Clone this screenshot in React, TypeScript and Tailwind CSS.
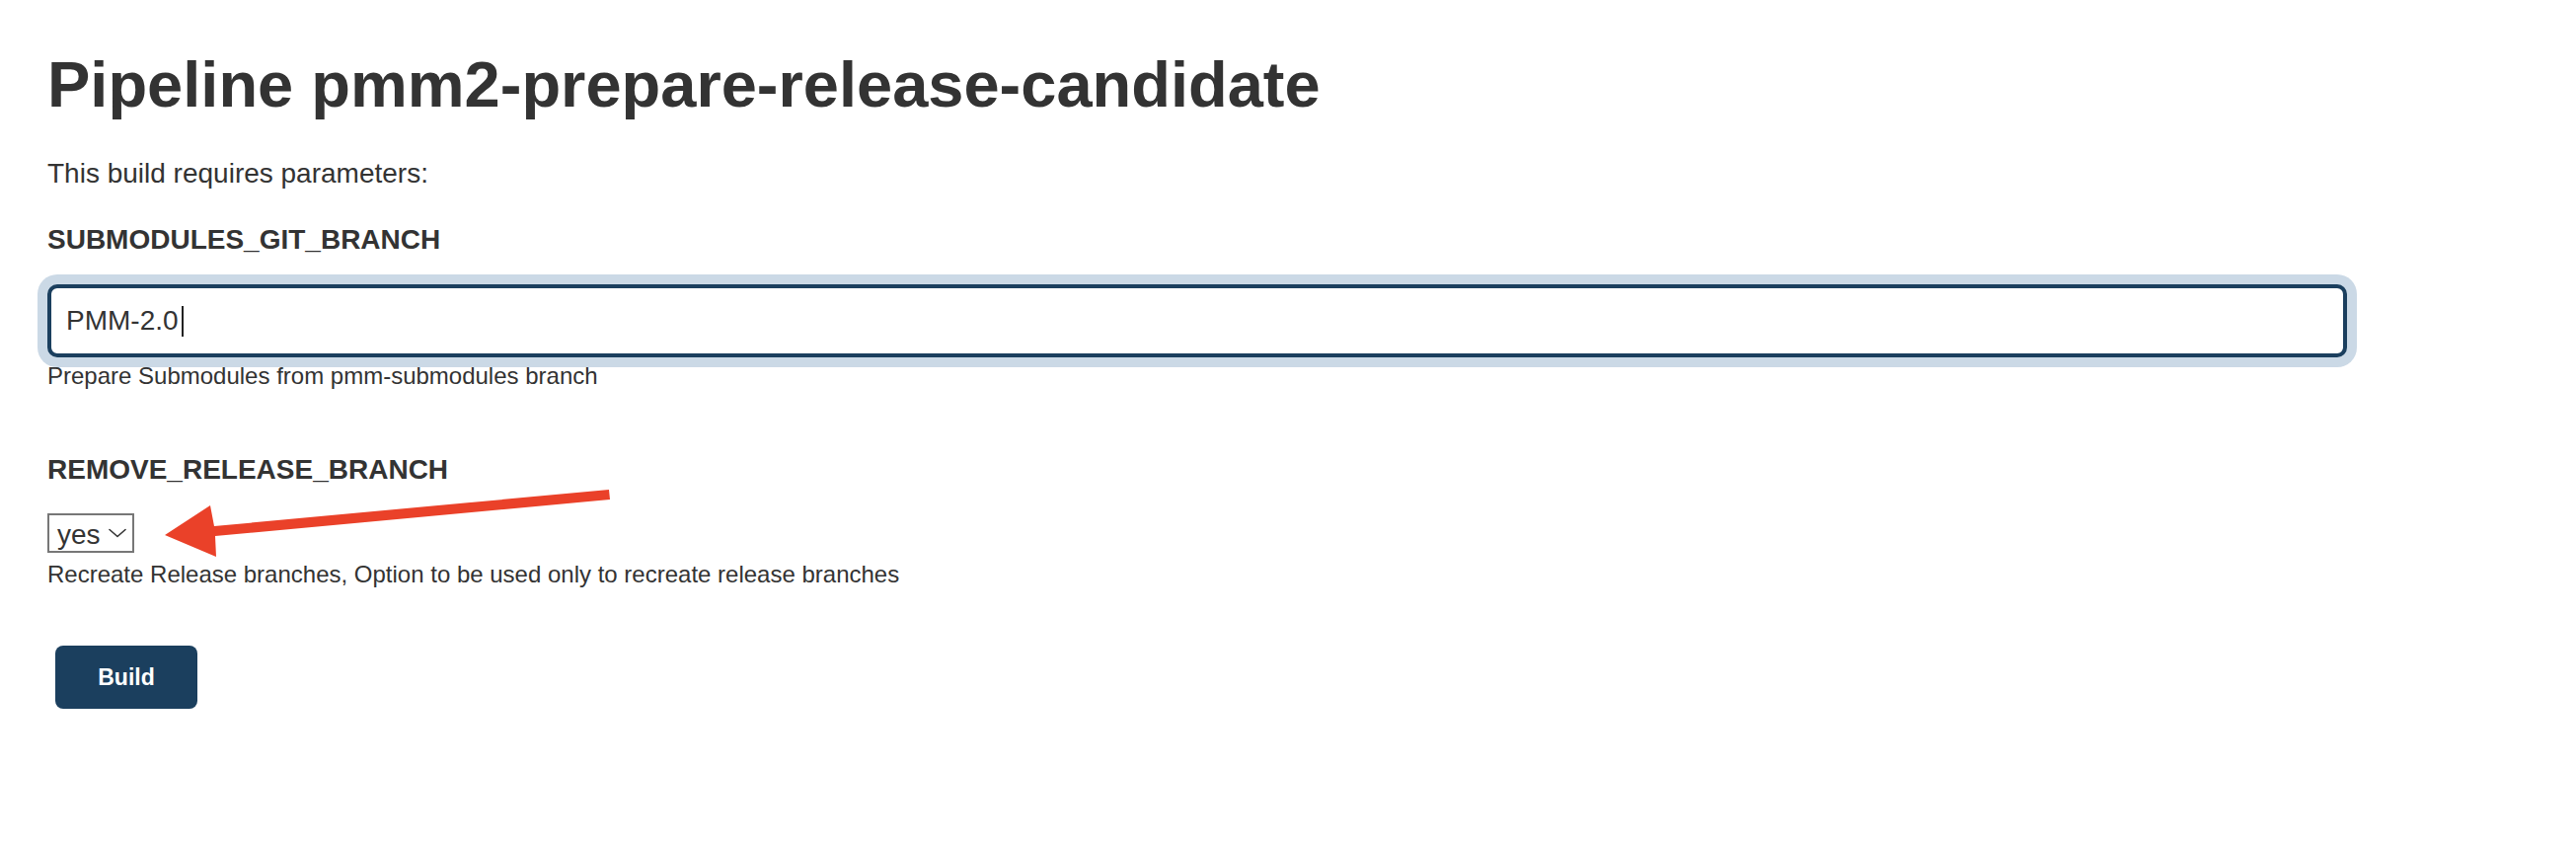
export default function App() {
  return (
    <div className="relative min-h-[857px] w-full bg-white text-[#333] font-['Liberation_Sans',Arial,sans-serif]">
      <div className="flex flex-col items-start pl-12 pt-[48px]">
        <h1 className="text-[65px] leading-[76px] font-bold">Pipeline pmm2-prepare-release-candidate</h1>
        <p className="mt-[32px] text-[28px] leading-[40px]">This build requires parameters:</p>

        <div className="mt-[27px] text-[28px] leading-[40px] font-bold">SUBMODULES_GIT_BRANCH</div>
        <div className="mt-[25px] flex h-[74px] w-[2330px] items-center rounded-[10px] border-4 border-[#1b3f5e] bg-white pl-[15px] text-[28px] shadow-[0_0_0_10px_#cbd9e6]">
          <span>PMM-2.0</span>
          <span className="ml-[3px] h-[31px] w-[2px] bg-[#222]" />
        </div>
        <p className="mt-[3px] text-[24px] leading-[32px]">Prepare Submodules from pmm-submodules branch</p>

        <div className="mt-[59px] text-[28px] leading-[40px] font-bold">REMOVE_RELEASE_BRANCH</div>
        <div className="mt-[24px] flex h-[40px] w-[88px] items-center border-2 border-[#777] pl-[8px] text-[28px] leading-none">
          <span className="mt-[3px]">yes</span>
          <svg className="ml-[8px]" width="18" height="10" viewBox="0 0 18 10" fill="none">
            <polyline points="1,1.5 9,8.5 17,1.5" stroke="#333" strokeWidth="1.6" strokeLinecap="round" strokeLinejoin="round" />
          </svg>
        </div>
        <p className="mt-[6px] text-[24px] leading-[32px]">Recreate Release branches, Option to be used only to recreate release branches</p>

        <button className="ml-[8px] mt-[56px] flex h-[64px] w-[144px] items-center justify-center rounded-[8px] bg-[#1b3f5e] text-[23px] font-bold text-white">
          Build
        </button>
      </div>

      <svg className="pointer-events-none absolute left-0 top-0" width="700" height="620" viewBox="0 0 700 620">
        <polygon
          points="167,542 213,512 217,533 617,496 618,506 218,543 219,564"
          fill="#ea4129"
        />
      </svg>
    </div>
  );
}
